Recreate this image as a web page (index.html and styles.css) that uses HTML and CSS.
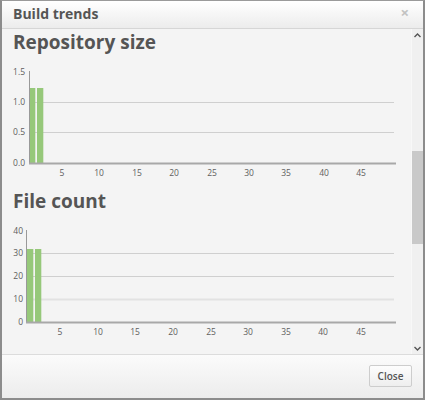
FILE: index.html
```html
<!DOCTYPE html>
<html>
<head>
<meta charset="utf-8">
<link rel="stylesheet" href="styles.css">
</head>
<body>
<div class="dialog">
  <div class="dlg-header">
    <span class="dlg-title">Build trends</span>
    <span class="dlg-x">×</span>
  </div>
  <div class="dlg-body">
    <div class="content">
      <section class="trend">
        <h2>Repository size</h2>
        <svg class="chart" width="409" height="133" viewBox="0 0 409 133">
          <g class="grid">
            <line x1="27" y1="47.5" x2="392" y2="47.5"/>
            <line x1="27" y1="77.5" x2="392" y2="77.5"/>
          </g>
          <g class="bars">
            <rect x="27" y="33" width="6.3" height="75"/>
            <rect x="35" y="33" width="6.3" height="75"/>
          </g>
          <line class="yaxis" x1="27.5" y1="16" x2="27.5" y2="108"/>
          <line class="xaxis" x1="27" y1="108.5" x2="394" y2="108.5"/>
          <g class="ylab">
            <text x="23" y="20">1.5</text>
            <text x="23" y="50">1.0</text>
            <text x="23" y="80">0.5</text>
            <text x="23" y="111">0.0</text>
          </g>
          <g class="xlab">
            <text x="60" y="121">5</text>
            <text x="97" y="121">10</text>
            <text x="135" y="121">15</text>
            <text x="172" y="121">20</text>
            <text x="210" y="121">25</text>
            <text x="247" y="121">30</text>
            <text x="284" y="121">35</text>
            <text x="322" y="121">40</text>
            <text x="359" y="121">45</text>
          </g>
        </svg>
      </section>
      <section class="trend">
        <h2>File count</h2>
        <svg class="chart" width="409" height="133" viewBox="0 0 409 133">
          <g class="grid">
            <line x1="24" y1="39.5" x2="392" y2="39.5"/>
            <line x1="24" y1="62.5" x2="392" y2="62.5"/>
            <line class="soft" x1="24" y1="85.5" x2="392" y2="85.5"/>
          </g>
          <g class="bars">
            <rect x="25" y="35" width="6.3" height="73"/>
            <rect x="33" y="35" width="6.3" height="73"/>
          </g>
          <line class="yaxis" x1="24.5" y1="16" x2="24.5" y2="108"/>
          <line class="xaxis" x1="24" y1="108.5" x2="394" y2="108.5"/>
          <g class="ylab">
            <text x="21" y="20">40</text>
            <text x="21" y="42">30</text>
            <text x="21" y="65">20</text>
            <text x="21" y="88">10</text>
            <text x="21" y="111">0</text>
          </g>
          <g class="xlab">
            <text x="58" y="121">5</text>
            <text x="96" y="121">10</text>
            <text x="133" y="121">15</text>
            <text x="171" y="121">20</text>
            <text x="209" y="121">25</text>
            <text x="246" y="121">30</text>
            <text x="284" y="121">35</text>
            <text x="321" y="121">40</text>
            <text x="359" y="121">45</text>
          </g>
        </svg>
      </section>
    </div>
    <div class="scrollbar">
      <div class="sb-btn">
        <svg width="7" height="5" viewBox="0 0 7 5"><path d="M0.5 4 L3.5 1 L6.5 4" fill="none" stroke="#555" stroke-width="1.4"/></svg>
      </div>
      <div class="sb-track"><div class="sb-thumb"></div></div>
      <div class="sb-btn">
        <svg width="7" height="5" viewBox="0 0 7 5"><path d="M0.5 1 L3.5 4 L6.5 1" fill="none" stroke="#555" stroke-width="1.4"/></svg>
      </div>
    </div>
  </div>
  <div class="dlg-footer">
    <button class="btn">Close</button>
  </div>
</div>
</body>
</html>
```
FILE: styles.css
```css
html, body {
  margin: 0;
  padding: 0;
  background: #fff;
}
.dialog {
  width: 425px;
  height: 400px;
  box-sizing: border-box;
  border: 2px solid #8c8c8c;
  border-top: 1px solid #9a9a9a;
  display: flex;
  flex-direction: column;
  font-family: "Open Sans", "DejaVu Sans", sans-serif;
  color: #555;
  background: #f4f4f4;
}
.dlg-header {
  height: 27px;
  border-bottom: 1px solid #d6d6d6;
  background: linear-gradient(#ffffff, #ececec);
  display: flex;
  align-items: center;
  justify-content: space-between;
  padding: 0 11px;
}
.dlg-title {
  font-size: 14px;
  font-weight: 700;
  color: #555;
  line-height: 20px;
  margin-top: -1px;
}
.dlg-x {
  font-size: 15px;
  font-weight: 700;
  color: #c2c2c2;
  line-height: 16px;
  margin-right: 3px;
  margin-top: -5px;
}
.dlg-body {
  height: 325px;
  display: flex;
}
.content {
  flex: 1;
  overflow: hidden;
  background: #f4f4f4;
}
.trend h2 {
  margin: 0;
  padding-left: 11px;
  font-size: 19px;
  font-weight: 700;
  line-height: 26px;
  color: #555;
}
.chart {
  display: block;
}
.grid line {
  stroke: #cfcfcf;
  stroke-width: 1;
}
.grid line.soft {
  stroke: #e2e2e2;
  stroke-width: 2;
}
.bars rect {
  fill: #96c87a;
}
.yaxis {
  stroke: #999;
  stroke-width: 1;
}
.xaxis {
  stroke: #a8a8a8;
  stroke-width: 2;
}
.ylab text, .xlab text {
  font-family: "Open Sans", "DejaVu Sans", sans-serif;
  font-size: 8.5px;
  fill: #5e5e5e;
}
.ylab text {
  text-anchor: end;
}
.xlab text {
  text-anchor: middle;
}
.scrollbar {
  width: 12px;
  background: #f0f0f0;
  border-left: 1px solid #f8f8f8;
  box-sizing: border-box;
  display: flex;
  flex-direction: column;
}
.sb-btn {
  height: 12px;
  display: flex;
  align-items: center;
  justify-content: center;
}
.sb-track {
  flex: 1;
}
.sb-thumb {
  margin-top: 110px;
  height: 93px;
  background: #c9c9c9;
}
.dlg-footer {
  flex: 1;
  border-top: 1px solid #dcdcdc;
  background: linear-gradient(#fbfbfb, #ececec);
  display: flex;
  justify-content: flex-end;
  align-items: flex-start;
  padding: 10px 11px 0 0;
}
.btn {
  width: 43px;
  height: 22px;
  padding: 0;
  border: 1px solid #cdcdcd;
  border-radius: 2px;
  background: linear-gradient(#fdfdfd, #eeeeee);
  font-family: "Open Sans", "DejaVu Sans", sans-serif;
  font-size: 10px;
  font-weight: 600;
  color: #555;
}
```
